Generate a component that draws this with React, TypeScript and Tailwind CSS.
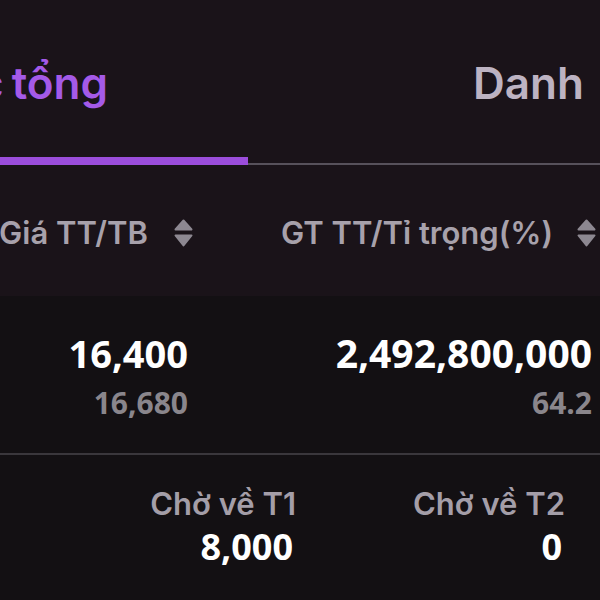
import React from 'react'

function SortIcon() {
  return (
    <svg width="19" height="29" viewBox="0 0 19 29" className="shrink-0">
      <polygon points="9.5,1.5 17.5,10.5 1.5,10.5" fill="#8d8891" stroke="#8d8891" strokeWidth="2" strokeLinejoin="round" />
      <polygon points="1.5,16.5 17.5,16.5 9.5,26.5" fill="#8d8891" stroke="#8d8891" strokeWidth="2" strokeLinejoin="round" />
    </svg>
  )
}

export default function App() {
  return (
    <div className="w-[600px] h-[600px] overflow-hidden bg-[#131013] font-['Inter','Noto_Sans',sans-serif]">
      {/* tabs */}
      <div className="bg-[#1a1319] flex items-end h-[165px]">
        <div className="w-[248px] h-full flex flex-col">
          <div className="flex-1 flex justify-end overflow-hidden pr-[140px] pt-[61px]">
            <span className="whitespace-nowrap text-[44px] leading-none font-semibold text-[#a45ae8] [word-spacing:-3px]">
              Danh mục tổng
            </span>
          </div>
          <div className="h-[8px] bg-[#9b4ddb]" />
        </div>
        <div className="flex-1 h-full flex flex-col">
          <div className="flex-1 flex overflow-hidden pl-[225px] pt-[61px]">
            <span className="whitespace-nowrap text-[44px] leading-none font-semibold text-[#bdb3c2] [word-spacing:12px]">
              Danh mục
            </span>
          </div>
          <div className="h-[2px] bg-[#57515b]" />
        </div>
      </div>

      {/* column headers */}
      <div className="bg-[#1a1319] h-[131px] pt-[6px] flex items-center text-[31px] font-semibold text-[#a7a1ab]">
        <div className="w-[200px] flex items-center justify-end gap-[26px] pr-[7px] overflow-hidden">
          <span className="whitespace-nowrap">Giá TT/TB</span>
          <SortIcon />
        </div>
        <div className="flex-1 flex items-center justify-end gap-[24px] pr-[4px]">
          <span className="whitespace-nowrap">GT TT/Tỉ trọng(%)</span>
          <SortIcon />
        </div>
      </div>

      {/* position row */}
      <div className="h-[157px] flex font-['Open_Sans',sans-serif] font-bold">
        <div className="w-[200px] flex flex-col items-end pr-[12px] pt-[38px]">
          <span className="text-[38px] leading-none text-white">16,400</span>
          <span className="mt-[16px] text-[30px] leading-none text-[#8a868c]">16,680</span>
        </div>
        <div className="flex-1 flex flex-col items-end pr-[8px] pt-[37px]">
          <span className="text-[39px] leading-none text-white">2,492,800,000</span>
          <span className="mt-[16px] text-[30px] leading-none text-[#8a868c]">64.2</span>
        </div>
      </div>

      <div className="h-[2px] bg-[#3a373c]" />

      {/* pending settlement */}
      <div className="flex">
        <div className="w-[300px] flex flex-col items-end pr-[4px] pt-[33px]">
          <span className="text-[31px] leading-none font-semibold text-[#a49ea8]">Chờ về T1</span>
          <span className="mt-[10px] pr-[3px] font-['Open_Sans',sans-serif] font-bold text-[36px] leading-none text-white">8,000</span>
        </div>
        <div className="w-[268px] flex flex-col items-end pr-[3px] pt-[33px]">
          <span className="text-[31px] leading-none font-semibold text-[#a49ea8]">Chờ về T2</span>
          <span className="mt-[10px] pr-[3px] font-['Open_Sans',sans-serif] font-bold text-[36px] leading-none text-white">0</span>
        </div>
      </div>
    </div>
  )
}
